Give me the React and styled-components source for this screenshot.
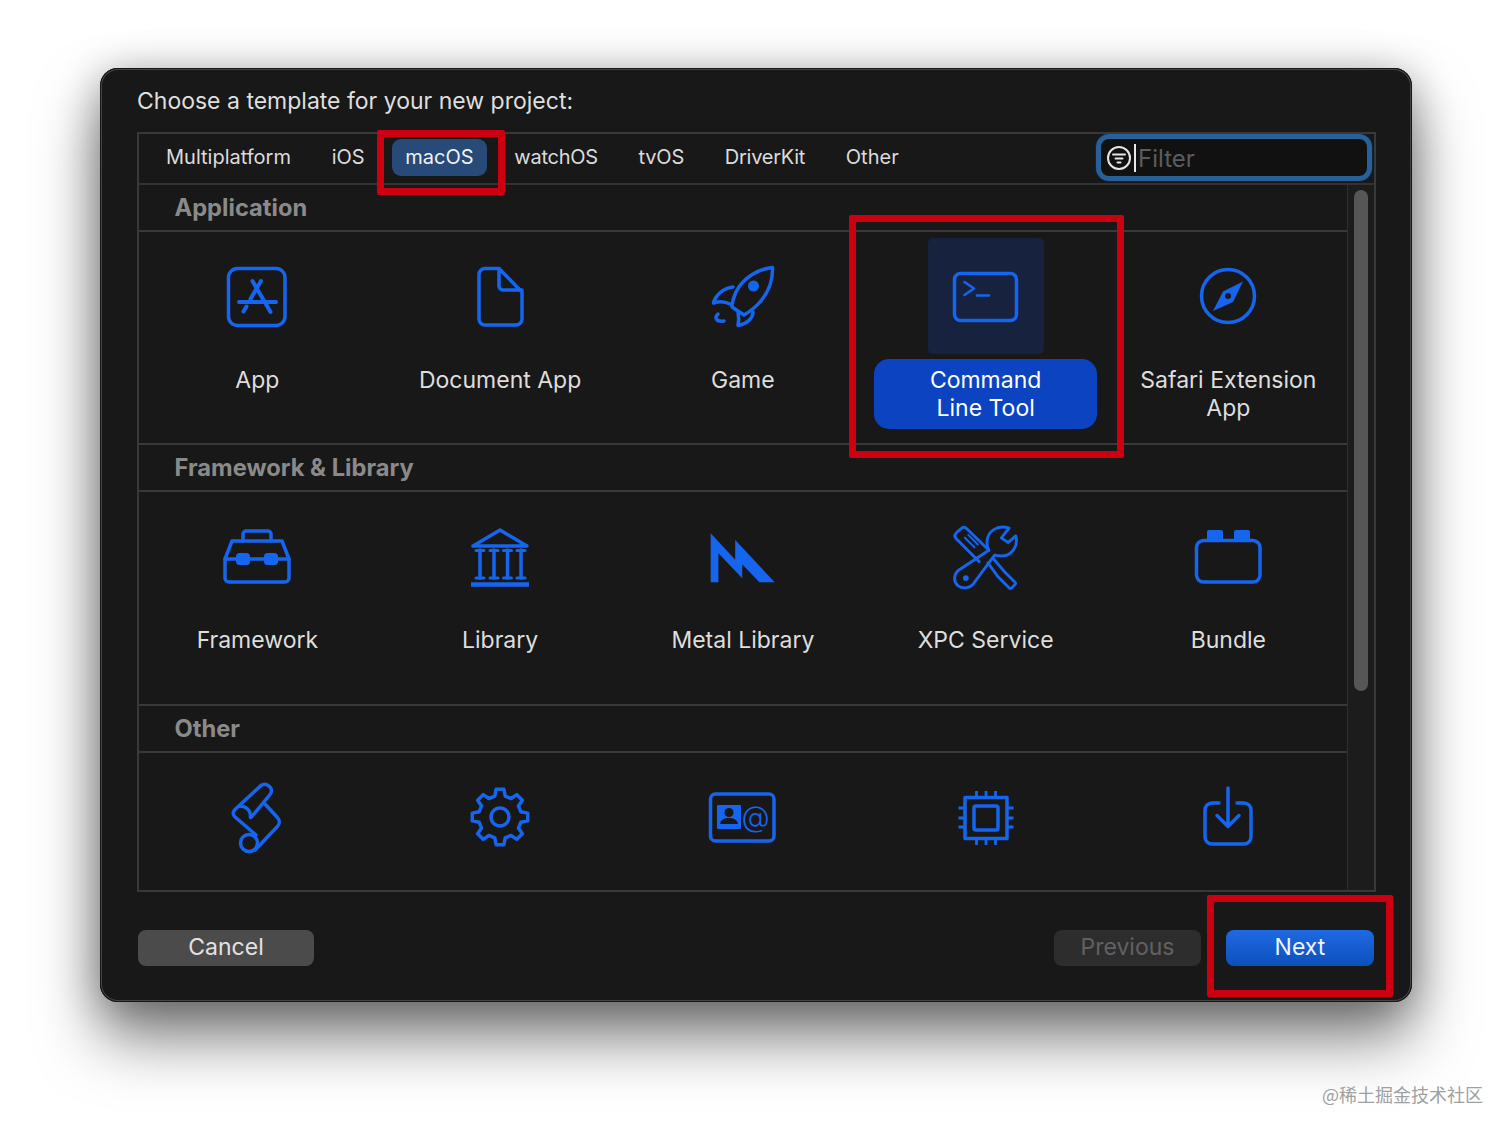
import React from "react";
import styled, { createGlobalStyle } from "styled-components";

const BLUE = "#1565ee";
const PANEL_BG = "#191819";

const GlobalStyle = createGlobalStyle`
  html, body {
    margin: 0;
    padding: 0;
    background: #fff;
  }
  body {
    font-family: Inter, "Liberation Sans", sans-serif;
  }
`;

const Page = styled.div`
  position: relative;
  width: 1512px;
  height: 1135px;
  padding: 68px 0 0 100px;
  box-sizing: border-box;
  overflow: hidden;
  background: #fff;
`;

const Window = styled.div`
  width: 1312px;
  height: 934px;
  box-sizing: border-box;
  padding: 0 37px;
  background: ${PANEL_BG};
  border-radius: 18px;
  box-shadow: inset 0 0 0 1px #161616, inset 0 0 0 2px #454546, 0 36px 62px rgba(0, 0, 0, 0.5),
    0 4px 40px rgba(0, 0, 0, 0.28);
`;

const Title = styled.div`
  height: 64px;
  line-height: 66px;
  font-size: 23px;
  color: #dfdfdf;
`;

const Panel = styled.div`
  width: 1239px;
  height: 760px;
  box-sizing: border-box;
  border: 2px solid #39393a;
  overflow: hidden;
  display: flex;
  flex-direction: column;
`;

const TabBar = styled.div`
  flex: none;
  height: 51px;
  box-sizing: border-box;
  display: flex;
  align-items: center;
  gap: 14.7px;
  padding: 0 2px 2px 14px;
  border-bottom: 2px solid #333334;
`;

const Tab = styled.div`
  height: 37px;
  line-height: 37px;
  padding: 0 13px;
  border-radius: 9px;
  font-size: 20px;
  letter-spacing: ${(p) => p.$track || 0}px;
  color: ${(p) => (p.$active ? "#f2f2f2" : "#dcdcdc")};
  background: ${(p) => (p.$active ? "#274a79" : "transparent")};
`;

const FilterBox = styled.div`
  margin-left: auto;
  width: 276px;
  height: 47px;
  box-sizing: border-box;
  display: flex;
  align-items: center;
  padding-left: 5px;
  border: 5px solid #28609a;
  border-radius: 13px;
  background: #111112;
  box-shadow: 0 0 0 1px #123;
`;

const Caret = styled.div`
  width: 2px;
  height: 28px;
  margin: 0 2px 0 2px;
  background: #e8e8e8;
`;

const FilterText = styled.span`
  padding-top: 2px;
  font-size: 24px;
  color: #5c5c5d;
`;

const Body = styled.div`
  flex: 1;
  min-height: 0;
  display: flex;
`;

const Sections = styled.div`
  flex: 1;
  min-width: 0;
  overflow: hidden;
`;

const SectionHeader = styled.div`
  height: 47px;
  box-sizing: border-box;
  padding-left: 35.5px;
  line-height: 45px;
  font-size: 23.7px;
  font-weight: 700;
  color: #8a8a8b;
  border-bottom: 2px solid #39393a;
`;

const TemplateGrid = styled.div`
  height: ${(p) => p.$height}px;
  box-sizing: border-box;
  border-bottom: ${(p) => (p.$last ? "none" : "2px solid #39393a")};
  overflow: hidden;
`;

const TemplateRow = styled.div`
  margin-left: -3px;
  display: grid;
  grid-template-columns: repeat(5, 242.75px);
`;

const Cell = styled.div`
  display: flex;
  flex-direction: column;
  align-items: center;
  padding-top: 6px;
`;

const IconBox = styled.div`
  width: 116px;
  height: 116px;
  box-sizing: border-box;
  padding-top: ${(p) => p.$shift || 0}px;
  display: flex;
  align-items: center;
  justify-content: center;
  border-radius: 5px;
  background: ${(p) => (p.$selected ? "#17223f" : "transparent")};
`;

const Label = styled.div`
  margin-top: 5px;
  width: 223px;
  box-sizing: border-box;
  padding: 7px 0;
  min-height: 70px;
  text-align: center;
  white-space: pre-line;
  line-height: 28px;
  font-size: 23px;
  border-radius: 15px;
  color: ${(p) => (p.$selected ? "#fff" : "#dedede")};
  background: ${(p) => (p.$selected ? "#0b43c1" : "transparent")};
`;

const ScrollTrack = styled.div`
  flex: none;
  width: 27px;
  box-sizing: border-box;
  padding: 5px 6px 0 6px;
  border-left: 1px solid #2e2e2f;
  background: #1c1c1d;
`;

const ScrollThumb = styled.div`
  width: 14px;
  height: 501px;
  border-radius: 7px;
  background: #565657;
`;

const Footer = styled.div`
  display: flex;
  align-items: center;
  padding: 38px 1px 0 1px;
`;

const Button = styled.div`
  width: ${(p) => p.$width}px;
  height: 36px;
  margin-left: ${(p) => p.$gap || 0}px;
  border-radius: 8px;
  text-align: center;
  line-height: 35px;
  font-size: 23px;
  color: ${(p) => p.$color};
  background: ${(p) => p.$bg};
`;

const Spacer = styled.div`
  flex: 1;
`;

const Callout = styled.div`
  position: absolute;
  left: ${(p) => p.$x}px;
  top: ${(p) => p.$y}px;
  width: ${(p) => p.$w}px;
  height: ${(p) => p.$h}px;
  box-sizing: border-box;
  border: 7px solid #cc0011;
  border-radius: 2px;
  pointer-events: none;
`;

const Watermark = styled.div`
  position: absolute;
  left: 1322px;
  top: 1081px;
  font-family: "Noto Sans CJK SC", sans-serif;
  font-size: 18px;
  line-height: 26px;
  color: #a0a0a0;
`;

const Glyph = styled.svg`
  display: block;
  fill: none;
  stroke: ${BLUE};
  stroke-width: 3.5;
  stroke-linecap: round;
  stroke-linejoin: round;
  .fill {
    fill: ${BLUE};
    stroke: none;
  }
`;

const Icon = ({ children }) => (
  <Glyph width="80" height="80" viewBox="0 0 80 80">
    {children}
  </Glyph>
);

// eight tooth cog, easier to compute than to write out by hand
const gearPath = (() => {
  const pt = (r, deg) => {
    const a = ((deg - 90) * Math.PI) / 180;
    return `${(40 + r * Math.cos(a)).toFixed(2)} ${(40 + r * Math.sin(a)).toFixed(2)}`;
  };
  const parts = [];
  for (let i = 0; i < 8; i++) {
    const c = i * 45;
    parts.push(`${pt(21.5, c - 14)} L${pt(28, c - 8)} L${pt(28, c + 8)} L${pt(21.5, c + 14)}`);
  }
  return `M${parts.join(" L")} Z`;
})();

const AppIcon = () => (
  <Icon>
    <rect x="11.5" y="12.5" width="56.5" height="57" rx="9" />
    <path strokeWidth="4" d="M44 25 L33.5 43 M29.5 50.5 L26.5 55.5 M35.5 25 L53.5 56 M22 46 H59" />
  </Icon>
);

const DocIcon = () => (
  <Icon>
    <path d="M25 12.5 H39 L62 36 V63 a6 6 0 0 1 -6 6 H25 a6 6 0 0 1 -6 -6 V18.5 a6 6 0 0 1 6 -6 Z" />
    <path d="M39 12.5 V30 a4 4 0 0 0 4 4 H62" />
  </Icon>
);

const RocketIcon = () => (
  <Icon>
    <path d="M69.5 11.5 C55 13 40 22 33 36 C30 43 29 47 29 51 L41 59 C46 56 52 52 57 46 C65 37 70 25 69.5 11.5 Z" />
    <path d="M30 31 C20 32 12 40 10.5 47 C16 45 21 45 27 48" />
    <path d="M50 56 C50 62 44 68 35 69.5 C36 65 36 61 35 56" />
    <path d="M15 58 C11 62 13 66 21 65" />
    <circle className="fill" cx="50.5" cy="30" r="5.5" />
  </Icon>
);

const TerminalIcon = () => (
  <Icon>
    <rect x="8.5" y="17.5" width="62" height="47" rx="6" />
    <path strokeWidth="2.6" d="M18.5 26 L28 32.5 L18.5 39 M31 39.5 H43" />
  </Icon>
);

const CompassIcon = () => (
  <Icon>
    <circle cx="40" cy="40" r="26.5" />
    <path className="fill" d="M55 25.5 L45 46 L25 55 L35 35.5 Z" />
    <circle cx="40" cy="40" r="3" fill={PANEL_BG} stroke="none" />
  </Icon>
);

const ToolboxIcon = () => (
  <Icon>
    <path d="M8 42 L15 24 H65 L72 42 V61 a4 4 0 0 1 -4 4 H12 a4 4 0 0 1 -4 -4 Z" />
    <path d="M26 24 V17 a3 3 0 0 1 3 -3 H51 a3 3 0 0 1 3 3 V24" />
    <path d="M8 42 H72" />
    <rect className="fill" x="19" y="36" width="14" height="12" rx="3.5" />
    <rect className="fill" x="47" y="36" width="14" height="12" rx="3.5" />
  </Icon>
);

const LibraryIcon = () => (
  <Icon>
    <path d="M40 13 L13 29 H67 Z" />
    <path d="M20 33 V61 M34 33 V61 M47.5 33 V61 M61 33 V61" />
    <path
      strokeWidth="3"
      d="M16 33.5 H24 M30 33.5 H38 M43.5 33.5 H51.5 M57 33.5 H65 M16 61 H24 M30 61 H38 M43.5 61 H51.5 M57 61 H65"
    />
    <path strokeWidth="4.4" strokeLinecap="butt" d="M11 67.5 H69" />
  </Icon>
);

const MetalIcon = () => (
  <Icon>
    <path
      className="fill"
      d="M7.7 16.3 L32.2 42.7 V23 L71.7 65.3 H56.4 L39.2 47.3 V61.3 L15.4 36.3 V65.3 H7.7 Z"
    />
  </Icon>
);

const ToolsIcon = () => (
  <Icon>
    <g transform="translate(1.6 1.6) scale(.96)">
      <path strokeWidth="3" d="M33 45 L9 21 C7 19 7 17 9 15 L14 10.5 C16 8.5 18 8.5 20 10.5 L43 33" />
      <path strokeWidth="2" d="M18 20 L28 30 M21.5 17 L31.5 27" />
      <path
        strokeWidth="3"
        d="M42 46 L52 60 L64 72 C65 73 66 73 67 72 L70 69 C71 68 71 67 70 66 L59 55 L47 41"
      />
      <path
        strokeWidth="3"
        d="M64 10 C52 6 41 13 41 25 C41 28 42 31 43 33 L11 54 C6 59 6 66 11 70 C15 73 22 73 26 69 L49 38 C51 39 54 39 56 39 C67 39 74 28 71 18 L63 25 L56 20 Z"
      />
      <circle className="fill" cx="19" cy="62" r="3" />
    </g>
  </Icon>
);

const BundleIcon = () => (
  <Icon>
    <rect x="8.5" y="23.5" width="63.5" height="41.5" rx="7" />
    <path className="fill" d="M21 13 H33 a2 2 0 0 1 2 2 V23 H19 V15 a2 2 0 0 1 2 -2 Z" />
    <path className="fill" d="M48 13 H60 a2 2 0 0 1 2 2 V23 H46 V15 a2 2 0 0 1 2 -2 Z" />
  </Icon>
);

const ScrollIcon = () => (
  <Icon>
    <path d="M44 8.5 L18.5 32 C15.5 35 15.5 37 17.5 39.5 L39 58" />
    <path d="M44 8.5 C47 6.5 50 7 52.5 9.5 C55 12 55 15 53 17.5 L34.5 40" />
    <path d="M22 29 C29 29 34 33 33.5 40.5" />
    <path d="M47 26 L60 40 C63 43 63 47 60 50 L38 73" />
    <circle cx="32" cy="66" r="8.5" />
  </Icon>
);

const GearIcon = () => (
  <Icon>
    <path d={gearPath} />
    <circle cx="40" cy="40" r="9" />
  </Icon>
);

const ContactIcon = () => (
  <Icon>
    <rect x="7.5" y="17" width="63.5" height="47" rx="5" />
    <rect className="fill" x="14" y="28" width="24" height="24" rx="1" />
    <circle cx="26" cy="35.5" r="4.5" fill={PANEL_BG} stroke="none" />
    <path fill={PANEL_BG} stroke="none" d="M17 47 C18 42 22 41 26 41 C30 41 34 42 35 47 Z" />
    <text x="52.5" y="49.5" textAnchor="middle" fontFamily="Inter, sans-serif" fontSize="29" fontWeight="300" fill={BLUE} stroke="none">
      @
    </text>
  </Icon>
);

const ChipIcon = () => (
  <Icon>
    <rect x="19" y="20.5" width="42" height="41" />
    <rect x="28" y="29" width="24" height="24" rx="2" />
    <path
      strokeWidth="2.8"
      strokeLinecap="butt"
      d="M30.5 14 V20 M40 14 V20 M49.5 14 V20 M30.5 62 V68 M40 62 V68 M49.5 62 V68 M12.5 31 H18.5 M12.5 41 H18.5 M12.5 50 H18.5 M61.5 31 H67.5 M61.5 41 H67.5 M61.5 50 H67.5"
    />
  </Icon>
);

const InstallIcon = () => (
  <Icon>
    <path d="M31 26 H24 a7 7 0 0 0 -7 7 V60 a7 7 0 0 0 7 7 H56 a7 7 0 0 0 7 -7 V33 a7 7 0 0 0 -7 -7 H49" />
    <path d="M40 11 V49 M29 38.5 L40 49.5 L51 38.5" />
  </Icon>
);

const FilterIcon = () => (
  <svg width="26" height="26" viewBox="0 0 26 26" fill="none" stroke="#e6e6e6" strokeWidth="2" strokeLinecap="round">
    <circle cx="13" cy="13" r="11" />
    <path d="M7 9.5 H19 M9.5 13.5 H16.5 M11.5 17.5 H14.5" />
  </svg>
);

const tabs = [
  { name: "Multiplatform" },
  { name: "iOS" },
  { name: "macOS", active: true },
  { name: "watchOS", track: -0.25 },
  { name: "tvOS", track: -0.2 },
  { name: "DriverKit", track: -0.25 },
  { name: "Other" },
];

const sections = [
  {
    title: "Application",
    height: 213,
    items: [
      { name: "App", Art: AppIcon },
      { name: "Document App", Art: DocIcon },
      { name: "Game", Art: RocketIcon },
      { name: "Command\nLine Tool", Art: TerminalIcon, selected: true },
      { name: "Safari Extension\nApp", Art: CompassIcon },
    ],
  },
  {
    title: "Framework & Library",
    height: 214,
    iconShift: 2,
    items: [
      { name: "Framework", Art: ToolboxIcon },
      { name: "Library", Art: LibraryIcon },
      { name: "Metal Library", Art: MetalIcon },
      { name: "XPC Service", Art: ToolsIcon },
      { name: "Bundle", Art: BundleIcon },
    ],
  },
  {
    title: "Other",
    height: 140,
    last: true,
    items: [
      { name: "", Art: ScrollIcon },
      { name: "", Art: GearIcon },
      { name: "", Art: ContactIcon },
      { name: "", Art: ChipIcon },
      { name: "", Art: InstallIcon },
    ],
  },
];

export default function App() {
  return (
    <Page>
      <GlobalStyle />
      <Window>
        <Title>Choose a template for your new project:</Title>
        <Panel>
          <TabBar>
            {tabs.map((t) => (
              <Tab key={t.name} $active={t.active} $track={t.track}>
                {t.name}
              </Tab>
            ))}
            <FilterBox>
              <FilterIcon />
              <Caret />
              <FilterText>Filter</FilterText>
            </FilterBox>
          </TabBar>
          <Body>
            <Sections>
              {sections.map((s) => (
                <React.Fragment key={s.title}>
                  <SectionHeader>{s.title}</SectionHeader>
                  <TemplateGrid $height={s.height} $last={s.last}>
                    <TemplateRow>
                      {s.items.map(({ name, Art, selected }, i) => (
                        <Cell key={`${s.title}__${i}`}>
                          <IconBox $selected={selected} $shift={s.iconShift}>
                            <Art />
                          </IconBox>
                          {name && <Label $selected={selected}>{name}</Label>}
                        </Cell>
                      ))}
                    </TemplateRow>
                  </TemplateGrid>
                </React.Fragment>
              ))}
            </Sections>
            <ScrollTrack>
              <ScrollThumb />
            </ScrollTrack>
          </Body>
        </Panel>
        <Footer>
          <Button $width={176} $color="#e2e2e2" $bg="#4b4b4c">
            Cancel
          </Button>
          <Spacer />
          <Button $width={147} $color="#616162" $bg="#2d2d2e">
            Previous
          </Button>
          <Button $width={148} $gap={25} $color="#f0f4ff" $bg="linear-gradient(#1f69e2, #0d50bc)">
            Next
          </Button>
        </Footer>
      </Window>
      <Callout $x={377} $y={130} $w={128} $h={65} />
      <Callout $x={849} $y={215} $w={275} $h={243} />
      <Callout $x={1207} $y={895} $w={186} $h={102} />
      <Watermark>@稀土掘金技术社区</Watermark>
    </Page>
  );
}
